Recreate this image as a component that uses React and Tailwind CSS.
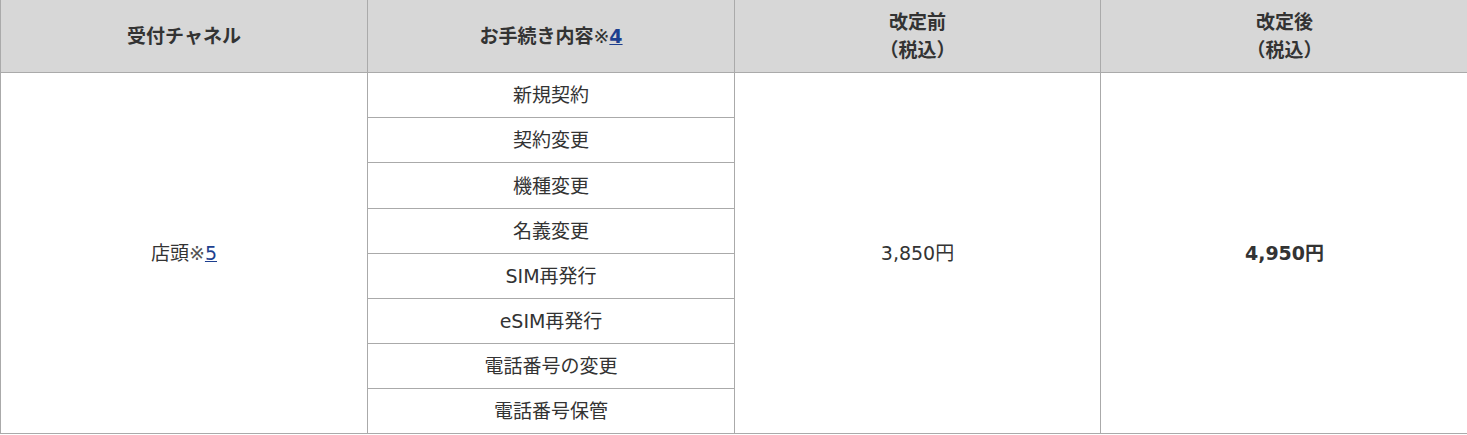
export default function App() {
  const procedures = [
    "新規契約",
    "契約変更",
    "機種変更",
    "名義変更",
    "SIM再発行",
    "eSIM再発行",
    "電話番号の変更",
    "電話番号保管",
  ];

  const font = { fontFamily: '"DejaVu Sans", "Noto Sans CJK JP", sans-serif' };

  return (
    <div className="w-[1467px] overflow-hidden bg-white" style={font}>
      <table className="w-[1468px] table-fixed border-collapse text-[19px] leading-[28px] text-[#333]">
        <colgroup>
          <col className="w-[367px]" />
          <col className="w-[367px]" />
          <col className="w-[366px]" />
          <col className="w-[368px]" />
        </colgroup>
        <thead>
          <tr className="bg-[#d7d7d7]">
            <th className="h-[72px] border-x border-b border-[#aaa] px-2 py-2 font-bold">受付チャネル</th>
            <th className="border-x border-b border-[#aaa] px-2 py-2 font-bold">
              お手続き内容<span className="font-normal">※</span>
              <a href="#" className="text-[#1d3f8f] underline">4</a>
            </th>
            <th className="border-x border-b border-[#aaa] px-2 py-2 font-bold">
              改定前
              <br />
              （税込）
            </th>
            <th className="border-x border-b border-[#aaa] px-2 py-2 font-bold">
              改定後
              <br />
              （税込）
            </th>
          </tr>
        </thead>
        <tbody>
          {procedures.map((p, i) => (
            <tr key={p}>
              {i === 0 && (
                <td rowSpan={8} className="border border-[#aaa] px-2 text-center align-middle">
                  店頭<span className="text-[#555]">※</span>
                  <a href="#" className="text-[#1d3f8f] underline">5</a>
                </td>
              )}
              <td
                className={`border border-[#aaa] px-2 py-2 text-center ${
                  i === 2 ? "h-[46px]" : "h-[45px]"
                }`}
              >
                {p}
              </td>
              {i === 0 && (
                <td rowSpan={8} className="border border-[#aaa] px-2 text-center align-middle">
                  3,850円
                </td>
              )}
              {i === 0 && (
                <td rowSpan={8} className="border border-[#aaa] px-2 text-center align-middle font-bold">
                  4,950円
                </td>
              )}
            </tr>
          ))}
        </tbody>
      </table>
    </div>
  );
}
